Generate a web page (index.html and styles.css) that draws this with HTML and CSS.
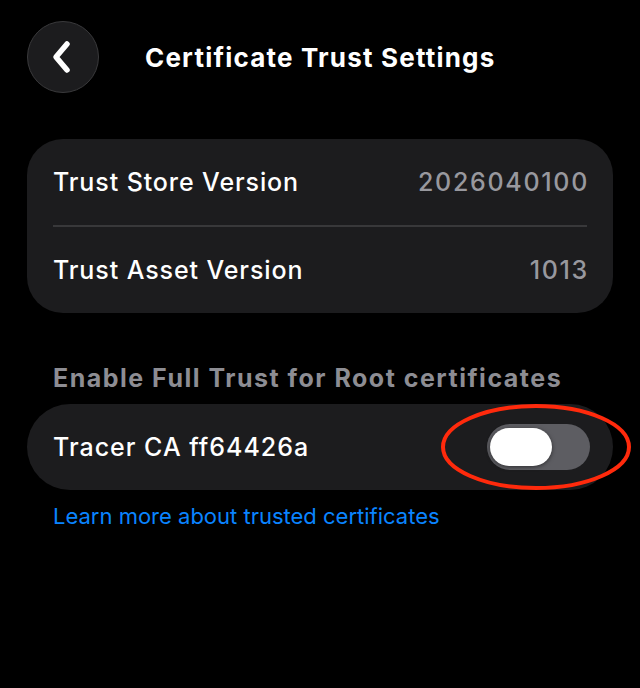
FILE: index.html
```html
<!DOCTYPE html>
<html>
<head>
<meta charset="utf-8">
<link rel="stylesheet" href="styles.css">
</head>
<body>
<div class="screen">
  <header class="nav">
    <div class="back">
      <svg width="24" height="36" viewBox="0 0 24 36"><path d="M17 5 L6 18 L17 31" fill="none" stroke="#fff" stroke-width="5.5" stroke-linecap="round" stroke-linejoin="round"/></svg>
    </div>
    <h1 class="title">Certificate Trust Settings</h1>
  </header>

  <section class="card">
    <div class="row">
      <span class="label">Trust Store Version</span>
      <span class="value">2026040100</span>
    </div>
    <div class="divider"></div>
    <div class="row">
      <span class="label">Trust Asset Version</span>
      <span class="value">1013</span>
    </div>
  </section>

  <h2 class="section-title">Enable Full Trust for Root certificates</h2>

  <section class="card pill">
    <div class="row">
      <span class="label wide">Tracer CA ff64426a</span>
      <div class="toggle-wrap">
        <div class="toggle"><div class="knob"></div></div>
        <svg class="circle" width="192" height="88" viewBox="0 0 192 88"><ellipse cx="96" cy="44" rx="93" ry="41" fill="none" stroke="#ff2a0c" stroke-width="4"/></svg>
      </div>
    </div>
  </section>

  <a class="link">Learn more about trusted certificates</a>
</div>
</body>
</html>
```

FILE: styles.css
```css
html, body {
  margin: 0;
  padding: 0;
  background: #000;
}
.screen {
  width: 640px;
  height: 688px;
  background: #000;
  font-family: Inter, "Noto Sans", sans-serif;
  color: #fff;
  padding: 21px 27px 0;
  box-sizing: border-box;
}
.nav {
  display: flex;
  align-items: center;
  height: 72px;
}
.back {
  width: 70px;
  height: 70px;
  border-radius: 50%;
  background: #1c1c1e;
  border: 1px solid #3a3a3c;
  display: flex;
  align-items: center;
  justify-content: center;
  flex-shrink: 0;
}
.back svg {
  margin-left: -3px;
}
.title {
  margin: 0 0 0 46px;
  font-size: 26px;
  font-weight: 700;
  letter-spacing: 1.2px;
}
.card {
  margin-top: 46px;
  background: #1c1c1e;
  border-radius: 36px;
  padding: 0 26px;
}
.row {
  display: flex;
  align-items: center;
  justify-content: space-between;
  height: 86px;
}
.label {
  font-size: 25px;
  font-weight: 500;
  letter-spacing: 0.9px;
}
.label.wide {
  letter-spacing: 1px;
}
.value {
  font-size: 25px;
  font-weight: 500;
  color: #98989e;
  letter-spacing: 1.7px;
  margin-right: -2px;
}
.divider {
  height: 2px;
  background: #38383a;
}
.section-title {
  margin: 50px 0 0 26px;
  font-size: 25px;
  font-weight: 700;
  color: #8d8d93;
  letter-spacing: 1.5px;
  line-height: 30px;
}
.card.pill {
  margin-top: 11px;
  border-radius: 43px;
  padding-right: 23px;
}
.toggle-wrap {
  position: relative;
  display: flex;
  align-items: center;
}
.toggle {
  width: 103px;
  height: 46px;
  border-radius: 23px;
  background: #5d5d62;
  position: relative;
}
.knob {
  position: absolute;
  left: 3px;
  top: 4px;
  width: 62px;
  height: 38px;
  border-radius: 19px;
  background: #fff;
  box-shadow: 0 1px 4px rgba(0,0,0,0.5);
}
.circle {
  position: absolute;
  left: -47px;
  top: -21px;
}
.link {
  display: block;
  margin: 13px 0 0 26px;
  font-size: 22px;
  color: #0a84ff;
  letter-spacing: 0;
}
```
